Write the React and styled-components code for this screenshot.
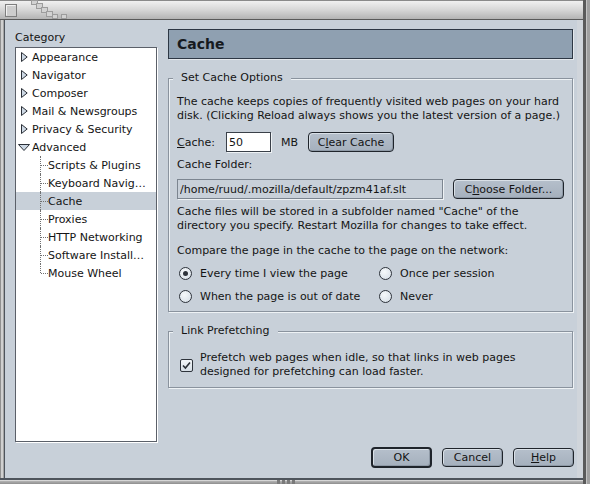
import React from "react";
import styled, { createGlobalStyle } from "styled-components";

const Global = createGlobalStyle`
  html, body { margin: 0; padding: 0; background: #c8d0d9; }
  body {
    font-family: "DejaVu Sans", "Bitstream Vera Sans", sans-serif;
    font-size: 11px;
    color: #141414;
  }
  * { box-sizing: border-box; }
`;

const Window = styled.div`
  width: 590px;
  height: 484px;
  display: flex;
  overflow: hidden;
  background: #c8d0d9;
`;

const Frame = styled.div`
  flex: 1;
  display: flex;
  flex-direction: column;
  min-width: 0;
`;

const TitleStrip = styled.div`
  flex: none;
  height: 20px;
  display: flex;
  background: linear-gradient(
    to bottom,
    #8a8a8a 0 1px,
    #f0f0f0 1px,
    #d6d6d6 10px,
    #b4b4b4 19px,
    #5a5a5a 19px 20px
  );
`;

const Middle = styled.div`
  flex: 1;
  display: flex;
  min-height: 0;
`;

const LeftEdge = styled.div`
  flex: none;
  width: 5px;
  background: linear-gradient(
    to right,
    #909090 0 1px,
    #d0d0d0 1px 3px,
    #a4a4a4 3px 4px,
    #4e545c 4px 5px
  );
`;

const RightInner = styled.div`
  flex: none;
  width: 6px;
  background: #d0d5db;
`;

const RightEdge = styled.div`
  flex: none;
  width: 7px;
  background: linear-gradient(
    to right,
    #5a5a5a 0 3px,
    #c4c4c4 3px 4px,
    #a0a0a0 4px
  );
`;

const BottomStrip = styled.div`
  flex: none;
  height: 6px;
  display: flex;
  padding-left: 277px;
  background: linear-gradient(
    to bottom,
    #4e545c 0 2px,
    #d6d6d6 2px 3px,
    #b4b4b4 3px,
    #8e8e8e 6px
  );
`;

const Body = styled.div`
  flex: 1;
  min-width: 0;
  display: flex;
  flex-direction: column;
  padding: 9px 4px 10px 10px;
`;

const Main = styled.div`
  flex: 1;
  min-height: 0;
  display: grid;
  grid-template-columns: 142px 405px;
  column-gap: 11px;
`;

const LeftColumn = styled.div`
  display: flex;
  flex-direction: column;
  min-height: 0;
`;

const CategoryLabel = styled.div`
  line-height: 14px;
  height: 16px;
  padding-top: 2px;
  margin-bottom: 2px;
`;

const TreeBox = styled.div`
  flex: 1;
  background: #ffffff;
  border: 1px solid #5b6069;
  box-shadow: 1px 1px 0 #ffffff;
  overflow: hidden;
`;

const TreeRow = styled.div`
  height: 18px;
  display: flex;
  align-items: center;
  white-space: nowrap;
  padding-left: ${(p) => (p.$child ? 24 : 0)}px;
  background: ${(p) => (p.$selected ? "#c8d0d9" : "transparent")};
`;

const Twisty = styled.span`
  flex: none;
  width: 16px;
  display: flex;
  justify-content: center;
  align-items: center;
`;

const Connector = styled.span`
  flex: none;
  align-self: stretch;
  width: 8px;
  position: relative;

  &::before {
    content: "";
    position: absolute;
    left: 0;
    top: 0;
    bottom: ${(p) => (p.$last ? "9px" : "0")};
    border-left: 1px dotted #707070;
  }
  &::after {
    content: "";
    position: absolute;
    left: 1px;
    top: 9px;
    width: 7px;
    border-top: 1px dotted #707070;
  }
`;

const RightColumn = styled.div`
  display: flex;
  flex-direction: column;
  gap: 12px;
`;

const PanelHeader = styled.div`
  height: 30px;
  display: flex;
  align-items: center;
  padding-left: 8px;
  background: #8fa0b1;
  border: 1px solid #2d3744;
  box-shadow: 1px 1px 0 #e4e8ec;
  font-size: 14px;
  font-weight: bold;
  color: #161a1f;
`;

const Group = styled.fieldset`
  margin: 0;
  min-width: 0;
  padding: ${(p) => p.$pad};
  border: 1px solid #8a939e;
  box-shadow: inset 1px 1px 0 #eef2f5, 1px 1px 0 #eef2f5;
`;

const Legend = styled.legend`
  padding: 0 8px;
  margin-left: -4px;
  line-height: 14px;
  background: #c8d0d9;
`;

const Text = styled.div`
  line-height: 14px;
  white-space: nowrap;
  margin-top: ${(p) => p.$mt || 0}px;
`;

const Row = styled.div`
  display: flex;
  align-items: center;
  margin-top: ${(p) => p.$mt || 0}px;
`;

const FieldLabel = styled.span`
  width: ${(p) => p.$w}px;
  flex: none;
`;

const Unit = styled.span`
  margin: 0 10px;
`;

const TextInput = styled.input`
  flex: none;
  width: ${(p) => p.$w}px;
  height: 20px;
  margin: 0;
  padding: 0 2px;
  font: inherit;
  color: #141414;
  background: ${(p) => (p.$muted ? "#c8d0d9" : "#ffffff")};
  border: 1px solid ${(p) => (p.$muted ? "#7c8590" : "#3a4049")};
  box-shadow: 1px 1px 0 #eef2f5;
  outline: none;
`;

const Button = styled.button`
  flex: none;
  width: ${(p) => p.$w}px;
  height: ${(p) => p.$h || 20}px;
  margin: 0 0 0 ${(p) => p.$ml || 0}px;
  padding: 0;
  font: inherit;
  color: #141414;
  border: ${(p) => (p.$default ? 2 : 1)}px solid #1f242b;
  border-radius: 4px;
  background: linear-gradient(#b5bfcb, #a5b0bd);
  box-shadow: inset 1px 1px 0 #d9e0e7, inset -1px -1px 0 #8e99a6;
`;

const RadioGrid = styled.div`
  display: grid;
  grid-template-columns: 200px auto;
  grid-auto-rows: 20px;
  row-gap: 3px;
  margin-top: 5px;
`;

const RadioOption = styled.div`
  display: flex;
  align-items: center;
`;

const RadioCircle = styled.span`
  flex: none;
  width: 13px;
  height: 13px;
  margin: 0 8px 0 2px;
  border-radius: 50%;
  border: 1px solid #2e333b;
  background: radial-gradient(circle at 40% 35%, #f6f9fb, #d3dce5);
  display: flex;
  align-items: center;
  justify-content: center;

  &::after {
    content: "";
    width: 5px;
    height: 5px;
    border-radius: 50%;
    background: #2e333b;
    display: ${(p) => (p.$on ? "block" : "none")};
  }
`;

const CheckRow = styled.div`
  display: flex;
  align-items: center;
`;

const CheckBox = styled.span`
  flex: none;
  width: 13px;
  height: 13px;
  margin: 0 7px 0 3px;
  border: 1px solid #2e333b;
  border-radius: 2px;
  background: linear-gradient(#f3f6f9, #d6dee6);
  display: flex;
  align-items: center;
  justify-content: center;
`;

const ButtonRow = styled.div`
  flex: none;
  height: 21px;
  margin-top: 5px;
  margin-right: -1px;
  display: flex;
  align-items: center;
  justify-content: flex-end;
  gap: 10px;
`;

const CATEGORY = [
  { label: "Appearance", twisty: "closed" },
  { label: "Navigator", twisty: "closed" },
  { label: "Composer", twisty: "closed" },
  { label: "Mail & Newsgroups", twisty: "closed" },
  { label: "Privacy & Security", twisty: "closed" },
  { label: "Advanced", twisty: "open" },
  { label: "Scripts & Plugins", child: true },
  { label: "Keyboard Navig…", child: true },
  { label: "Cache", child: true, selected: true },
  { label: "Proxies", child: true },
  { label: "HTTP Networking", child: true },
  { label: "Software Install…", child: true },
  { label: "Mouse Wheel", child: true, last: true },
];

function TwistyIcon({ open }) {
  return open ? (
    <svg width="12" height="7" viewBox="0 0 12 7">
      <path d="M0.5 0.5 H11.5 L6 6.5 Z" fill="#cdd8e4" stroke="#2b3038" strokeLinejoin="round" />
    </svg>
  ) : (
    <svg width="7" height="10" viewBox="0 0 7 10">
      <path d="M0.5 0.5 L6.2 5 L0.5 9.5 Z" fill="#cdd8e4" stroke="#2b3038" strokeLinejoin="round" />
    </svg>
  );
}

function TitleDecor() {
  const steps = [
    [31.5, 0.5, 6, 4],
    [36.5, 3.5, 6, 5],
    [41.5, 7.5, 6, 5],
    [46.5, 11.5, 6, 5],
    [52.5, 14.5, 5, 4],
    [61.5, 14.5, 5, 4],
  ];
  return (
    <svg width="72" height="19" viewBox="0 0 72 19">
      <rect x="5.5" y="4.5" width="11" height="12" fill="#cdcdcd" stroke="#7e7e7e" />
      <path d="M6.5 15.5 V5.5 H15.5" fill="none" stroke="#f2f2f2" />
      {steps.map(([x, y, w, h], i) => (
        <rect key={i} x={x} y={y} width={w} height={h} fill="#d2d2d2" stroke="#9c9c9c" />
      ))}
    </svg>
  );
}

function Grip() {
  return (
    <svg width="19" height="6" viewBox="0 0 19 6">
      {[0, 5, 10, 15].map((x) => (
        <rect key={x} x={x} y="2" width="3" height="4" fill="#7a7a7a" />
      ))}
    </svg>
  );
}

function Radio({ on, children }) {
  return (
    <RadioOption>
      <RadioCircle $on={on} />
      <span>{children}</span>
    </RadioOption>
  );
}

export default function App() {
  return (
    <>
      <Global />
      <Window>
        <Frame>
          <TitleStrip>
            <TitleDecor />
          </TitleStrip>
          <Middle>
            <LeftEdge />
            <Body>
              <Main>
                <LeftColumn>
                  <CategoryLabel>Category</CategoryLabel>
                  <TreeBox>
                    {CATEGORY.map((item) => (
                      <TreeRow key={item.label} $child={item.child} $selected={item.selected}>
                        {item.child ? (
                          <Connector $last={item.last} />
                        ) : (
                          <Twisty>
                            <TwistyIcon open={item.twisty === "open"} />
                          </Twisty>
                        )}
                        <span>{item.label}</span>
                      </TreeRow>
                    ))}
                  </TreeBox>
                </LeftColumn>

                <RightColumn>
                  <PanelHeader>Cache</PanelHeader>

                  <Group $pad="10px 8px 5px 8px">
                    <Legend>Set Cache Options</Legend>
                    <Text>
                      The cache keeps copies of frequently visited web pages on your hard
                      <br />
                      disk. (Clicking Reload always shows you the latest version of a page.)
                    </Text>
                    <Row $mt={9}>
                      <FieldLabel $w={49}>
                        <u>C</u>ache:
                      </FieldLabel>
                      <TextInput $w={45} defaultValue="50" />
                      <Unit>MB</Unit>
                      <Button $w={86}>
                        C<u>l</u>ear Cache
                      </Button>
                    </Row>
                    <Text $mt={6}>Cache Folder:</Text>
                    <Row $mt={7}>
                      <TextInput
                        $w={266}
                        $muted
                        readOnly
                        value="/home/ruud/.mozilla/default/zpzm41af.slt"
                      />
                      <Button $w={111} $ml={10}>
                        C<u>h</u>oose Folder...
                      </Button>
                    </Row>
                    <Text $mt={6}>
                      Cache files will be stored in a subfolder named "Cache" of the
                      <br />
                      directory you specify. Restart Mozilla for changes to take effect.
                    </Text>
                    <Text $mt={11}>Compare the page in the cache to the page on the network:</Text>
                    <RadioGrid>
                      <Radio on>Every time I view the page</Radio>
                      <Radio>Once per session</Radio>
                      <Radio>When the page is out of date</Radio>
                      <Radio>Never</Radio>
                    </RadioGrid>
                  </Group>

                  <Group $pad="13px 8px 8px 8px">
                    <Legend>Link Prefetching</Legend>
                    <CheckRow>
                      <CheckBox>
                        <svg width="9" height="9" viewBox="0 0 9 9">
                          <path d="M1 4.5 L3.4 7 L8 1.5" fill="none" stroke="#2a2f36" strokeWidth="1.6" />
                        </svg>
                      </CheckBox>
                      <Text>
                        Prefetch web pages when idle, so that links in web pages
                        <br />
                        designed for prefetching can load faster.
                      </Text>
                    </CheckRow>
                  </Group>
                </RightColumn>
              </Main>

              <ButtonRow>
                <Button $w={61} $h={21} $default>
                  OK
                </Button>
                <Button $w={61} $h={19}>
                  Cancel
                </Button>
                <Button $w={61} $h={19}>
                  <u>H</u>elp
                </Button>
              </ButtonRow>
            </Body>
            <RightInner />
          </Middle>
          <BottomStrip>
            <Grip />
          </BottomStrip>
        </Frame>
        <RightEdge />
      </Window>
    </>
  );
}
